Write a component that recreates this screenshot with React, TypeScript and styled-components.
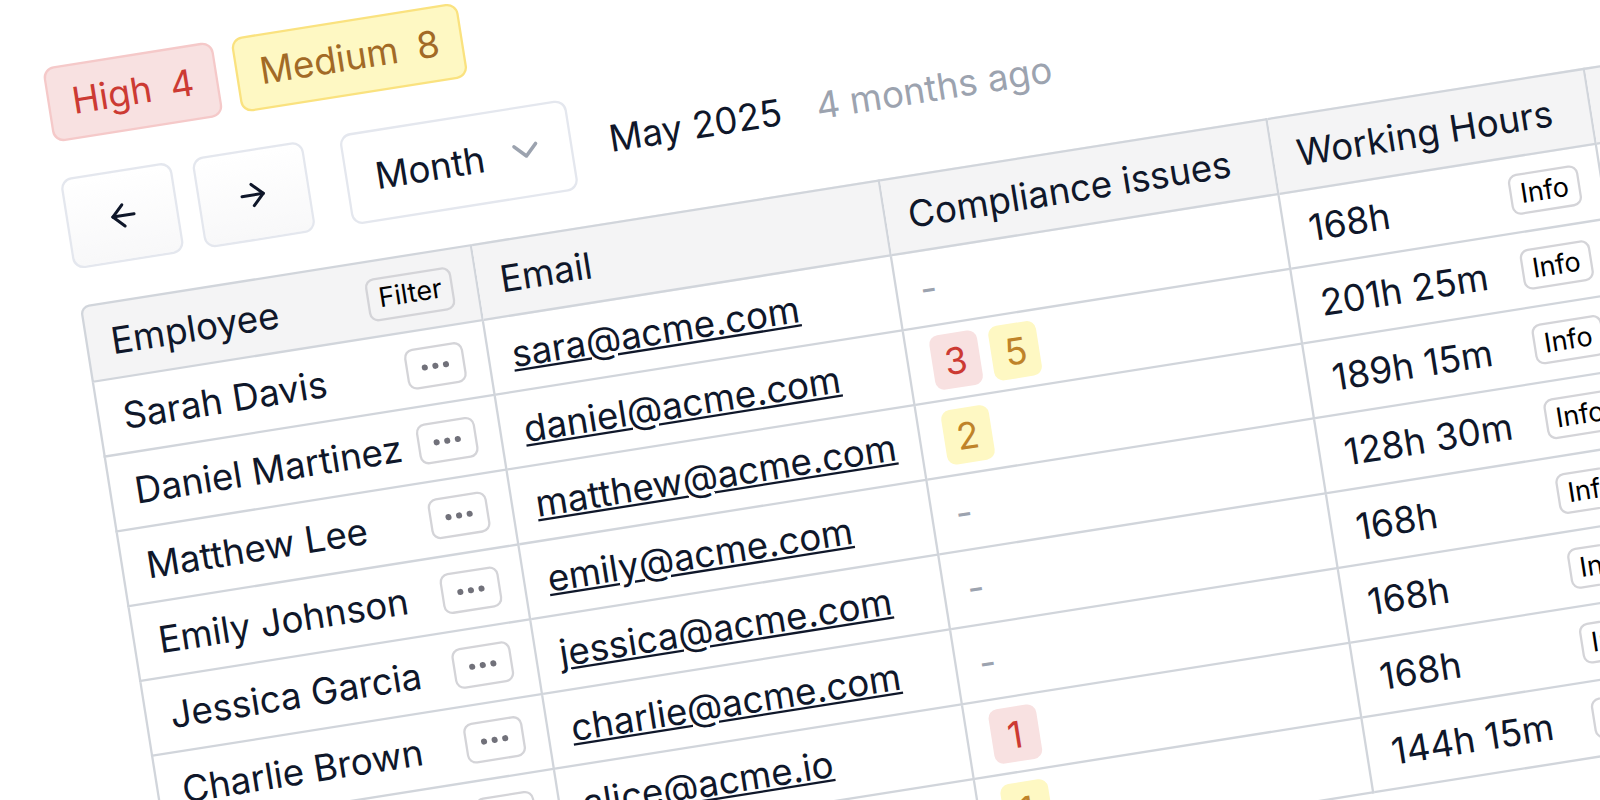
import React from "react";
import styled, { createGlobalStyle } from "styled-components";
import { ArrowLeft, ArrowRight, ChevronDown, Ellipsis } from "lucide-react";

const GlobalStyle = createGlobalStyle`
  html, body {
    margin: 0;
    padding: 0;
    width: 100%;
    height: 100%;
    overflow: hidden;
    background: #ffffff;
  }
`;

const Stage = styled.div`
  width: 730px;
  display: flex;
  flex-direction: column;
  gap: 16.5px;
  font-family: Inter, "Liberation Sans", sans-serif;
  font-size: 16px;
  color: #0f172a;
  transform-origin: 0 0;
  transform: translate(42px, 68px) rotate(-9deg) scale(2.295);
`;

const Badges = styled.div`
  display: flex;
  gap: 7.6px;
`;

const Badge = styled.div<{ $tone: "high" | "medium" }>`
  height: 32.6px;
  box-sizing: border-box;
  padding: 0 9.8px;
  display: flex;
  align-items: center;
  gap: 8.2px;
  border-radius: 5px;
  border: 1px solid ${(p) => (p.$tone === "high" ? "#f5c9c9" : "#fae27f")};
  background: ${(p) => (p.$tone === "high" ? "#f8e1e1" : "#fef8c3")};
  color: ${(p) => (p.$tone === "high" ? "#cc3a33" : "#a26a26")};
`;

const Toolbar = styled.div`
  display: flex;
  align-items: center;
  margin-bottom: -0.3px;
`;

const NavButton = styled.button`
  width: 49.4px;
  height: 40px;
  padding: 0;
  margin-right: 8.2px;
  display: flex;
  align-items: center;
  justify-content: center;
  border: 1px solid #e4e7ee;
  border-radius: 5px;
  background: linear-gradient(#ffffff, #f8f8f9);
  color: #0f172a;
`;

const MonthSelect = styled.div`
  width: 100px;
  height: 40px;
  box-sizing: border-box;
  margin: 0 15.9px 0 8.2px;
  padding: 0 10.6px 0 11.8px;
  display: flex;
  align-items: center;
  justify-content: space-between;
  border: 1px solid #e4e7ee;
  border-radius: 5px;
  background: #ffffff;

  svg {
    color: #9ca3af;
    margin-top: -2px;
  }
`;

const Period = styled.span`
  margin-right: 15.3px;
`;

const Muted = styled.span`
  color: #9ca3af;
`;

const Table = styled.table`
  width: 801px;
  table-layout: fixed;
  border-collapse: separate;
  border-spacing: 0;
  font-size: 16px;
`;

const HeadCell = styled.th<{ $w: number }>`
  width: ${(p) => p.$w}px;
  height: 33.8px;
  box-sizing: border-box;
  padding: 0 9.4px 0 10.2px;
  background: #f4f4f5;
  font-weight: 400;
  text-align: left;
  white-space: nowrap;
  border-top: 1px solid #d1d5db;
  border-right: 1px solid #d1d5db;
  border-bottom: 1px solid #d1d5db;

  &:first-child {
    border-left: 1px solid #d1d5db;
    border-top-left-radius: 4px;
  }
`;

const Cell = styled.td`
  height: 33px;
  box-sizing: border-box;
  padding: 0 9.4px 0 10.2px;
  border-right: 1px solid #d1d5db;
  border-bottom: 1px solid #d1d5db;

  &:first-child {
    border-left: 1px solid #d1d5db;
  }
`;

const CellRow = styled.div`
  display: flex;
  align-items: center;
  justify-content: space-between;
  white-space: nowrap;
`;

const SmallButton = styled.button`
  height: 18.8px;
  padding: 0 4.1px;
  display: inline-flex;
  align-items: center;
  justify-content: center;
  border: 1px solid #d4d4d8;
  border-radius: 4px;
  background: #ffffff;
  font-family: inherit;
  font-size: 11.76px;
  color: #000000;
`;

const HeadButton = styled(SmallButton)`
  background: #f4f4f5;
`;

const DotsButton = styled(SmallButton)`
  width: 25.9px;
  padding: 0;
  color: #71717a;
`;

const EmailLink = styled.a`
  color: #0f172a;
  text-decoration: underline;
`;

const Chips = styled.div`
  display: flex;
  gap: 5.3px;
`;

const Chip = styled.span<{ $tone: "high" | "medium" }>`
  width: 21.2px;
  height: 23.5px;
  display: flex;
  align-items: center;
  justify-content: center;
  border-radius: 4px;
  background: ${(p) => (p.$tone === "high" ? "#f8e1e1" : "#fef8c3")};
  color: ${(p) => (p.$tone === "high" ? "#cc3a33" : "#bf8329")};
`;

type Row = {
  name: string;
  email: string;
  high: number;
  medium: number;
  hours: string;
};

const rows: Row[] = [
  { name: "Sarah Davis", email: "sara@acme.com", high: 0, medium: 0, hours: "168h" },
  { name: "Daniel Martinez", email: "daniel@acme.com", high: 3, medium: 5, hours: "201h 25m" },
  { name: "Matthew Lee", email: "matthew@acme.com", high: 0, medium: 2, hours: "189h 15m" },
  { name: "Emily Johnson", email: "emily@acme.com", high: 0, medium: 0, hours: "128h 30m" },
  { name: "Jessica Garcia", email: "jessica@acme.com", high: 0, medium: 0, hours: "168h" },
  { name: "Charlie Brown", email: "charlie@acme.com", high: 0, medium: 0, hours: "168h" },
  { name: "Alice Wilson", email: "alice@acme.io", high: 1, medium: 0, hours: "168h" },
  { name: "Bob Miller", email: "bob@acme.com", high: 0, medium: 1, hours: "144h 15m" },
];

const App: React.FC = () => {
  return (
    <>
      <GlobalStyle />
      <Stage>
        <Badges>
          <Badge $tone="high">
            <span>High</span>
            <span>4</span>
          </Badge>
          <Badge $tone="medium">
            <span>Medium</span>
            <span>8</span>
          </Badge>
        </Badges>
        <Toolbar>
          <NavButton>
            <ArrowLeft size={16} />
          </NavButton>
          <NavButton>
            <ArrowRight size={16} />
          </NavButton>
          <MonthSelect>
            Month
            <ChevronDown size={19} />
          </MonthSelect>
          <Period>May 2025</Period>
          <Muted>4 months ago</Muted>
        </Toolbar>
        <Table>
          <thead>
            <tr>
              <HeadCell $w={172.6}>
                <CellRow>
                  Employee
                  <HeadButton>Filter</HeadButton>
                </CellRow>
              </HeadCell>
              <HeadCell $w={180}>Email</HeadCell>
              <HeadCell $w={171.5}>Compliance issues</HeadCell>
              <HeadCell $w={140.3}>Working Hours</HeadCell>
              <HeadCell $w={136.6} />
            </tr>
          </thead>
          <tbody>
            {rows.map((row) => (
              <tr key={row.email}>
                <Cell>
                  <CellRow>
                    {row.name}
                    <DotsButton>
                      <Ellipsis size={16} />
                    </DotsButton>
                  </CellRow>
                </Cell>
                <Cell>
                  <EmailLink href="#">{row.email}</EmailLink>
                </Cell>
                <Cell>
                  {row.high || row.medium ? (
                    <Chips>
                      {row.high > 0 && <Chip $tone="high">{row.high}</Chip>}
                      {row.medium > 0 && <Chip $tone="medium">{row.medium}</Chip>}
                    </Chips>
                  ) : (
                    <Muted>-</Muted>
                  )}
                </Cell>
                <Cell>
                  <CellRow>
                    {row.hours}
                    <SmallButton>Info</SmallButton>
                  </CellRow>
                </Cell>
                <Cell />
              </tr>
            ))}
          </tbody>
        </Table>
      </Stage>
    </>
  );
};

export default App;
